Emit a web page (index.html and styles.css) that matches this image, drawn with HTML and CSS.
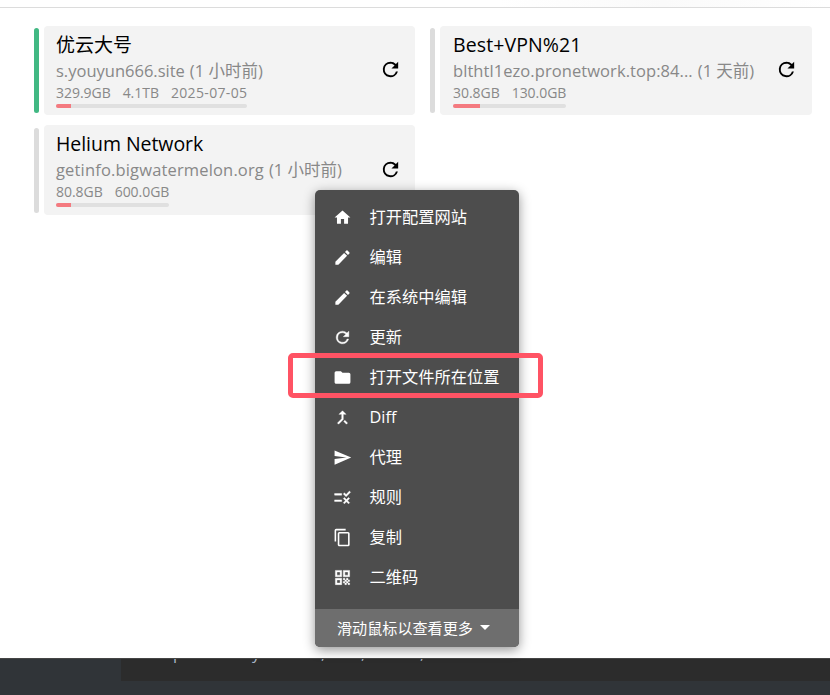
FILE: index.html
```html
<!DOCTYPE html>
<html lang="zh-CN">
<head>
<meta charset="utf-8">
<title>Profiles</title>
<link rel="stylesheet" href="styles.css">
</head>
<body>
<svg class="defs" width="0" height="0">
<symbol id="refresh" viewBox="0 0 24 24"><path d="M17.65 6.35A7.96 7.96 0 0 0 12 4a8 8 0 1 0 7.73 10h-2.08A6 6 0 1 1 12 6c1.66 0 3.14.69 4.22 1.78L13 11h7V4z"/></symbol>
<symbol id="pencil" viewBox="0 0 24 24"><path d="M3 17.25V21h3.75L17.81 9.94l-3.75-3.75zM20.71 7.04a1 1 0 0 0 0-1.41l-2.34-2.34a1 1 0 0 0-1.41 0l-1.83 1.83 3.75 3.75z"/></symbol>
</svg>
<main class="window">
  <header class="topbar"></header>
  <section class="profiles">
    <article class="profile active">
      <i class="marker"></i>
      <div class="card">
        <div class="info">
          <h2 class="cjk">优云大号</h2>
          <p class="source"><span class="host">s.youyun666.site</span> <span class="age">(1 小时前)</span></p>
          <div class="usage"><div class="stats"><span>329.9GB</span><span>4.1TB</span><span class="date">2025-07-05</span></div><div class="track"><i style="width:7.8%"></i></div></div>
        </div>
        <svg class="reload"><use href="#refresh"/></svg>
      </div>
    </article>
    <article class="profile second">
      <i class="marker"></i>
      <div class="card">
        <div class="info">
          <h2 class="wide">Best+VPN%21</h2>
          <p class="source"><span class="host port">blthtl1ezo.pronetwork.top:84...</span> <span class="age">(1 天前)</span></p>
          <div class="usage"><div class="stats"><span>30.8GB</span><span>130.0GB</span></div><div class="track"><i style="width:23.7%"></i></div></div>
        </div>
        <svg class="reload"><use href="#refresh"/></svg>
      </div>
    </article>
    <article class="profile last">
      <i class="marker"></i>
      <div class="card">
        <div class="info">
          <h2>Helium Network</h2>
          <p class="source"><span class="host long">getinfo.bigwatermelon.org</span> <span class="age">(1 小时前)</span></p>
          <div class="usage"><div class="stats"><span>80.8GB</span><span>600.0GB</span></div><div class="track"><i style="width:13.5%"></i></div></div>
        </div>
        <svg class="reload"><use href="#refresh"/></svg>
      </div>
    </article>
  </section>
</main>
<footer class="backdrop"><div class="editor"><span class="c1">p</span><span class="c2">y</span><span class="c3">,</span><span class="c4">,</span><span class="c5">,</span></div></footer>

<nav class="menu">
  <ul>
    <li><svg viewBox="0 0 24 24"><path d="M10 20v-6h4v6h5v-8h3L12 3 2 12h3v8z"/></svg>打开配置网站</li>
    <li><svg><use href="#pencil"/></svg>编辑</li>
    <li><svg><use href="#pencil"/></svg>在系统中编辑</li>
    <li><svg class="bold"><use href="#refresh"/></svg>更新</li>
    <li><svg viewBox="0 0 24 24"><path d="M10 4H4a2 2 0 0 0-2 2v12c0 1.1.9 2 2 2h16a2 2 0 0 0 2-2V8a2 2 0 0 0-2-2h-8z"/></svg>打开文件所在位置</li>
    <li><svg class="bold" viewBox="0 0 24 24"><path d="M17 20.41 18.41 19 15 15.59 13.59 17zM7.5 8H11v5.59L5.59 19 7 20.41l6-6V8h3.5L12 3.5z"/></svg>Diff</li>
    <li><svg viewBox="0 0 24 24"><path d="M2.01 21 23 12 2.01 3 2 10l15 2-15 2z"/></svg>代理</li>
    <li><svg class="bold" viewBox="0 0 24 24"><path d="M16.54 11 13 7.46l1.41-1.41 2.12 2.12 4.24-4.24 1.41 1.41zM11 7H2v2h9zM21 13.41 19.59 12 17 14.59 14.41 12 13 13.41 15.59 16 13 18.59 14.41 20 17 17.41 19.59 20 21 18.59 18.41 16zM11 15H2v2h9z"/></svg>规则</li>
    <li><svg viewBox="0 0 24 24"><path d="M16 1H4a2 2 0 0 0-2 2v14h2V3h12zm3 4H8a2 2 0 0 0-2 2v14c0 1.1.9 2 2 2h11a2 2 0 0 0 2-2V7a2 2 0 0 0-2-2zm0 16H8V7h11z"/></svg>复制</li>
    <li><svg class="bold" viewBox="0 0 24 24"><path fill-rule="evenodd" d="M3 11h8V3H3zm2-6h4v4H5zM3 21h8v-8H3zm2-6h4v4H5zM13 3v8h8V3zm6 6h-4V5h4zM19 19h2v2h-2zM13 13h2v2h-2zM15 15h2v2h-2zM13 17h2v2h-2zM15 19h2v2h-2zM17 17h2v2h-2zM17 13h2v2h-2zM19 15h2v2h-2z"/></svg>二维码</li>
  </ul>
  <div class="more">滑动鼠标以查看更多<i></i></div>
</nav>
<div class="highlight"></div>
</body>
</html>
```

FILE: styles.css
```css
* { box-sizing: border-box; }
body { margin: 0; width: 830px; height: 695px; overflow: hidden; position: relative; background: #303438; font-family: "Open Sans", "Noto Sans CJK SC", sans-serif; }
.defs { position: absolute; }
.window { height: 658px; background: #fff; }
.topbar { height: 8px; border-bottom: 1px solid #dcdcdc; background: linear-gradient(90deg, #fff 60%, #fafafa 80%, #fff); }
.profiles { display: grid; grid-template-columns: 381px 382px; grid-template-rows: 89px 90px; column-gap: 15px; row-gap: 10px; padding: 18px 0 0 34px; }
.profile { display: flex; gap: 5px; align-items: center; }
.marker { width: 5px; height: 85px; border-radius: 3px; background: #dcdcdc; }
.active .marker { background: #41b883; }
.card { flex: 1; height: 100%; border-radius: 4px; background: #f3f3f3; display: flex; justify-content: space-between; align-items: flex-start; padding: 0 15px 0 12px; }
.second .card { padding-left: 13px; }
.info { padding-top: 5px; white-space: nowrap; }
h2 { margin: 0; font-size: 19.5px; line-height: 28px; font-weight: 400; letter-spacing: -.05px; color: #000; }
h2.wide { letter-spacing: .1px; }
h2.cjk { font-size: 19px; letter-spacing: 0; }
.source { margin: 0 0 2px; font-size: 16.5px; line-height: 23px; color: #888; display: flex; gap: 5px; }
.port { letter-spacing: .07px; }
.long { letter-spacing: .16px; }
.usage { width: fit-content; }
.stats { display: flex; gap: 12px; font-size: 14px; line-height: 18px; letter-spacing: -.04px; color: #888; }
.date { letter-spacing: .35px; }
.track { height: 4px; margin-top: 2px; border-radius: 2px; background: #e0e0e0; overflow: hidden; }
.track i { display: block; height: 4px; background: #f47a80; }
.reload { width: 23px; height: 23px; fill: #000; margin: 32px -2px 0 0; }
.last .reload { margin-top: 33px; }
.second .reload { margin-right: -1px; }
.backdrop { height: 37px; padding-left: 121px; border-top: 1px solid #454545; }
.editor { position: relative; height: 22px; background: #2c2c2c; overflow: hidden; font: 16px/20px "Open Sans", sans-serif; color: #a9b7c6; }
.editor span { position: absolute; top: -16px; }
.c1 { left: 52px; }
.c2 { left: 131px; }
.c3 { left: 200px; }
.c4 { left: 240px; }
.c5 { left: 299px; }
.menu { position: absolute; left: 315px; top: 190px; width: 204px; height: 457px; border-radius: 5px; overflow: hidden; background: #4d4d4d; color: #fff; box-shadow: 0 3px 12px rgba(0,0,0,.42); }
.menu ul { list-style: none; margin: 0; padding: 7px 0 0 18px; height: 419px; }
.menu li { display: flex; align-items: center; gap: 17.5px; height: 40px; font-size: 16.25px; line-height: 24px; white-space: nowrap; }
.menu svg { width: 19px; height: 19px; fill: #fff; }
.menu .bold { stroke: #fff; stroke-width: .5px; }
.more { height: 38px; display: flex; align-items: center; padding: 0 0 1px 22px; gap: 7px; background: #6e6e6e; font-size: 15.1px; line-height: 20px; white-space: nowrap; }
.more i { border: 5px solid transparent; border-top-color: #fff; border-bottom: 0; }
.highlight { position: absolute; left: 288px; top: 353px; width: 255px; height: 45px; border: 5px solid #ff5364; border-radius: 5px; }
```
